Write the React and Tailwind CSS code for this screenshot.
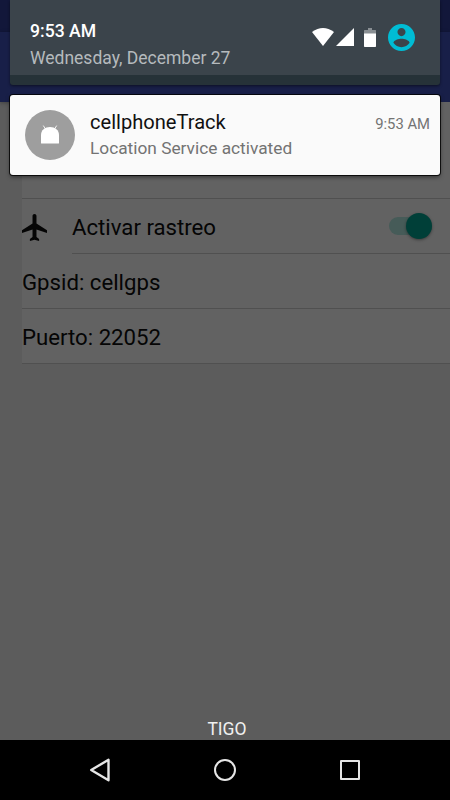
import React from 'react';

const StatusIcons = () => (
  <div className="flex items-center">
    <svg className="w-[22px] h-[18px] -mt-px" viewBox="0 0 22 18" fill="#fff">
      <path d="M0 4Q11 -4 22 4L11 18Z" />
    </svg>
    <svg className="w-[18px] h-[18px] ml-[2px] -mt-px" viewBox="0 0 18 18" fill="#fff">
      <path d="M18 0V18H0Z" />
    </svg>
    <svg className="w-3 h-[19px] ml-[10px] -mt-px" viewBox="0 0 12 19">
      <path d="M0 6V2.5Q0 2 .7 2H4V0H8V2H11.3Q12 2 12 2.5V6Z" fill="#898f93" />
      <path d="M0 5.5H12V18.3Q12 19 11.3 19H.7Q0 19 0 18.3Z" fill="#fff" />
    </svg>
    <svg className="w-[27px] h-[27px] ml-3" viewBox="2 2 20 20" fill="#00bcd4">
      <path d="M12 2C6.48 2 2 6.48 2 12s4.48 10 10 10 10-4.48 10-10S17.52 2 12 2zm0 3c1.66 0 3 1.34 3 3s-1.34 3-3 3-3-1.34-3-3 1.34-3 3-3zm0 14.2c-2.5 0-4.71-1.28-6-3.22.03-1.99 4-3.08 6-3.08 1.99 0 5.97 1.09 6 3.08-1.29 1.94-3.5 3.22-6 3.22z" />
    </svg>
  </div>
);

const ShadeHeader = () => (
  <div className="h-[85px] rounded-b-[3px] bg-[#263238] shadow-[0_1px_3px_rgba(0,0,0,0.5)]">
    <div className="flex justify-between h-[75px] pl-5 pr-[25px] bg-[#3b444b]">
      <div className="pt-5">
        <p className="text-[17.6px] leading-[22px] font-medium text-white">9:53 AM</p>
        <p className="mt-[5px] text-[17.5px] leading-[22px] text-[#b5babd]">Wednesday, December 27</p>
      </div>
      <div className="pt-6">
        <StatusIcons />
      </div>
    </div>
  </div>
);

const Notification = () => (
  <div className="flex h-20 mt-[10px] pl-[15px] pr-[10px] rounded-[3px] bg-[#fafafa] shadow-[0_0_0_1px_rgba(0,0,0,0.8),0_2px_4px_rgba(0,0,0,0.5)]">
    <div className="flex items-center justify-center w-[50px] h-[50px] mt-[15px] rounded-full bg-[#9e9e9e]">
      <svg className="w-[18px] h-[19px] -mt-px" viewBox="0 0 18 19" fill="#fff">
        <path d="M0 18V10C0 5 4 2 9 2S18 5 18 10V18Q18 18.6 17.4 18.6H.6Q0 18.6 0 18Z" />
        <path d="M2.3 .6L4.5 4M15.7 .6L13.5 4" stroke="#fff" strokeWidth="0.9" />
      </svg>
    </div>
    <div className="flex-1 ml-[15px] pt-[15px]">
      <div className="flex justify-between">
        <p className="text-[20.1px] leading-[24px] text-[#111]">cellphoneTrack</p>
        <p className="pt-[5px] text-[14.8px] leading-[18px] text-[#737373]">9:53 AM</p>
      </div>
      <p className="mt-[3px] text-[17.3px] leading-[22px] text-[#737373]">Location Service activated</p>
    </div>
  </div>
);

const Settings = () => (
  <div className="ml-[22px] bg-[#626262] text-[22.2px] leading-[26px] text-[#050505]">
    <div className="h-[97px] border-b border-[#505050]" />
    <div className="flex h-[55px]">
      <svg className="w-[25px] h-[27px] mt-[15px]" viewBox="2 2 19 20" preserveAspectRatio="none" fill="#050505">
        <path d="M21 16v-2l-8-5V3.5c0-.83-.67-1.5-1.5-1.5S10 2.67 10 3.5V9l-8 5v2l8-2.5V19l-2 1.5V22l3.5-1 3.5 1v-1.5L13 19v-5.5l8 2.5z" />
      </svg>
      <div className="flex flex-1 justify-between ml-[25px] pt-[15px] pr-[18px] border-b border-[#505050]">
        <span>Activar rastreo</span>
        <div className="flex items-center justify-end w-[43px] h-[18px] mt-[3px] rounded-full bg-[#465b58]">
          <div className="shrink-0 w-[26px] h-[26px] rounded-full bg-[#003f38] shadow-[0_1px_3px_rgba(0,0,0,0.4)]" />
        </div>
      </div>
    </div>
    <p className="h-[55px] pt-[15px] border-b border-[#505050]">Gpsid: cellgps</p>
    <p className="h-[55px] pt-[15px] border-b border-[#505050]">Puerto: 22052</p>
  </div>
);

const NavBar = () => (
  <div className="flex justify-between items-center h-[60px] pl-[89px] pr-[90px] bg-black">
    <svg className="w-[22px] h-6" viewBox="0 0 22 24" fill="none" stroke="#e6e6e6" strokeWidth="2.4" strokeLinejoin="round">
      <path d="M19.5 1.8V22.2L2.2 12Z" />
    </svg>
    <div className="w-[22px] h-[22px] -ml-px rounded-full border-2 border-[#e6e6e6]" />
    <div className="w-5 h-5 rounded-[1px] border-2 border-[#e6e6e6]" />
  </div>
);

const App = () => (
  <div className="relative flex flex-col w-[450px] h-[800px] overflow-hidden bg-[#5c5c5c] font-['Roboto',sans-serif]">
    <div className="h-8 bg-[#12173a]" />
    <div className="h-[70px] bg-[#181f48] shadow-[0_1px_4px_rgba(0,0,0,0.3)]" />
    <Settings />
    <p className="mt-auto mb-[1px] text-center text-[17.5px] leading-[20px] text-[#f0f0f0] pl-[4px]">TIGO</p>
    <NavBar />
    <div className="absolute inset-x-[10px] top-0">
      <ShadeHeader />
      <Notification />
    </div>
  </div>
);

export default App;
